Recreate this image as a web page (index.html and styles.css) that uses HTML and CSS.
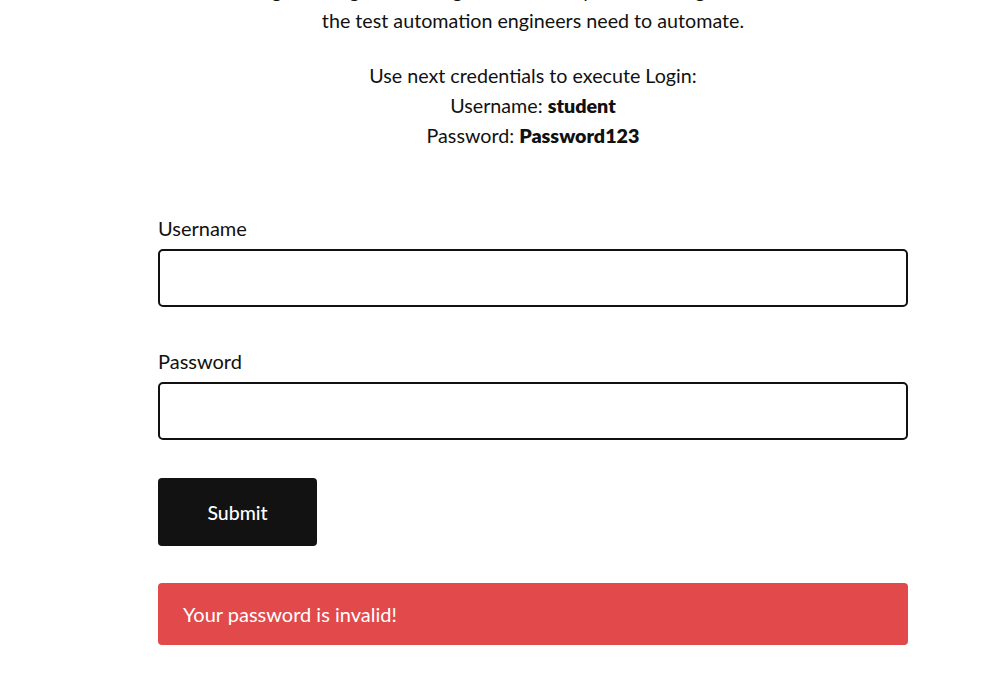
FILE: index.html
```html
<!DOCTYPE html>
<html lang="en">
<head>
<meta charset="utf-8">
<title>Test login</title>
<link rel="stylesheet" href="styles.css">
</head>
<body>
<main class="page">
  <section class="intro">
    <p class="lead">negative LogIn tests. Login functionality is something that most of<br>the test automation engineers need to automate.</p>
    <p class="creds">Use next credentials to execute Login:<br>Username: <b>student</b><br>Password: <b>Password123</b></p>
  </section>
  <form class="login-form">
    <div class="field">
      <label class="field-label" for="username">Username</label>
      <input class="field-input" id="username" type="text">
    </div>
    <div class="field">
      <label class="field-label" for="password">Password</label>
      <input class="field-input" id="password" type="password">
    </div>
    <button class="submit" type="button">Submit</button>
    <div class="error">Your password is invalid!</div>
  </form>
</main>
</body>
</html>
```

FILE: styles.css
```css
html, body {
  margin: 0;
  padding: 0;
  background: #ffffff;
  overflow: hidden;
}

body {
  font-family: Lato, "Open Sans", sans-serif;
  font-size: 20px;
  line-height: 30px;
  color: #111111;
}

.page {
  width: 750px;
  margin-left: 158px;
}

.intro {
  text-align: center;
  margin-top: -24px;
  font-size: 19.7px;
}

.intro p {
  margin: 0;
}

.lead {
  margin-bottom: 25px !important;
}

.creds b {
  font-weight: 800;
}

.login-form {
  margin-top: 62px;
  display: flex;
  flex-direction: column;
  align-items: flex-start;
}

.field {
  display: flex;
  flex-direction: column;
  width: 100%;
  margin-bottom: 39px;
}

.field + .field {
  margin-bottom: 38px;
}

.field-label {
  display: block;
  line-height: 30px;
  margin-bottom: 6px;
}

.field-input {
  box-sizing: border-box;
  width: 100%;
  height: 58px;
  border: 2px solid #111111;
  border-radius: 5px;
  background: #ffffff;
  margin: 0;
  padding: 0 14px;
  font: inherit;
}

.submit {
  width: 159px;
  height: 68px;
  border: none;
  border-radius: 4px;
  background: #121212;
  color: #ffffff;
  font-family: Lato, sans-serif;
  font-size: 19.5px;
  font-weight: 500;
  padding: 0;
  margin: 0 0 37px 0;
}

.error {
  box-sizing: border-box;
  width: 100%;
  height: 62px;
  display: flex;
  align-items: center;
  padding: 0 25px;
  background: #e2494b;
  color: #ffffff;
  border-radius: 4px;
}
```
